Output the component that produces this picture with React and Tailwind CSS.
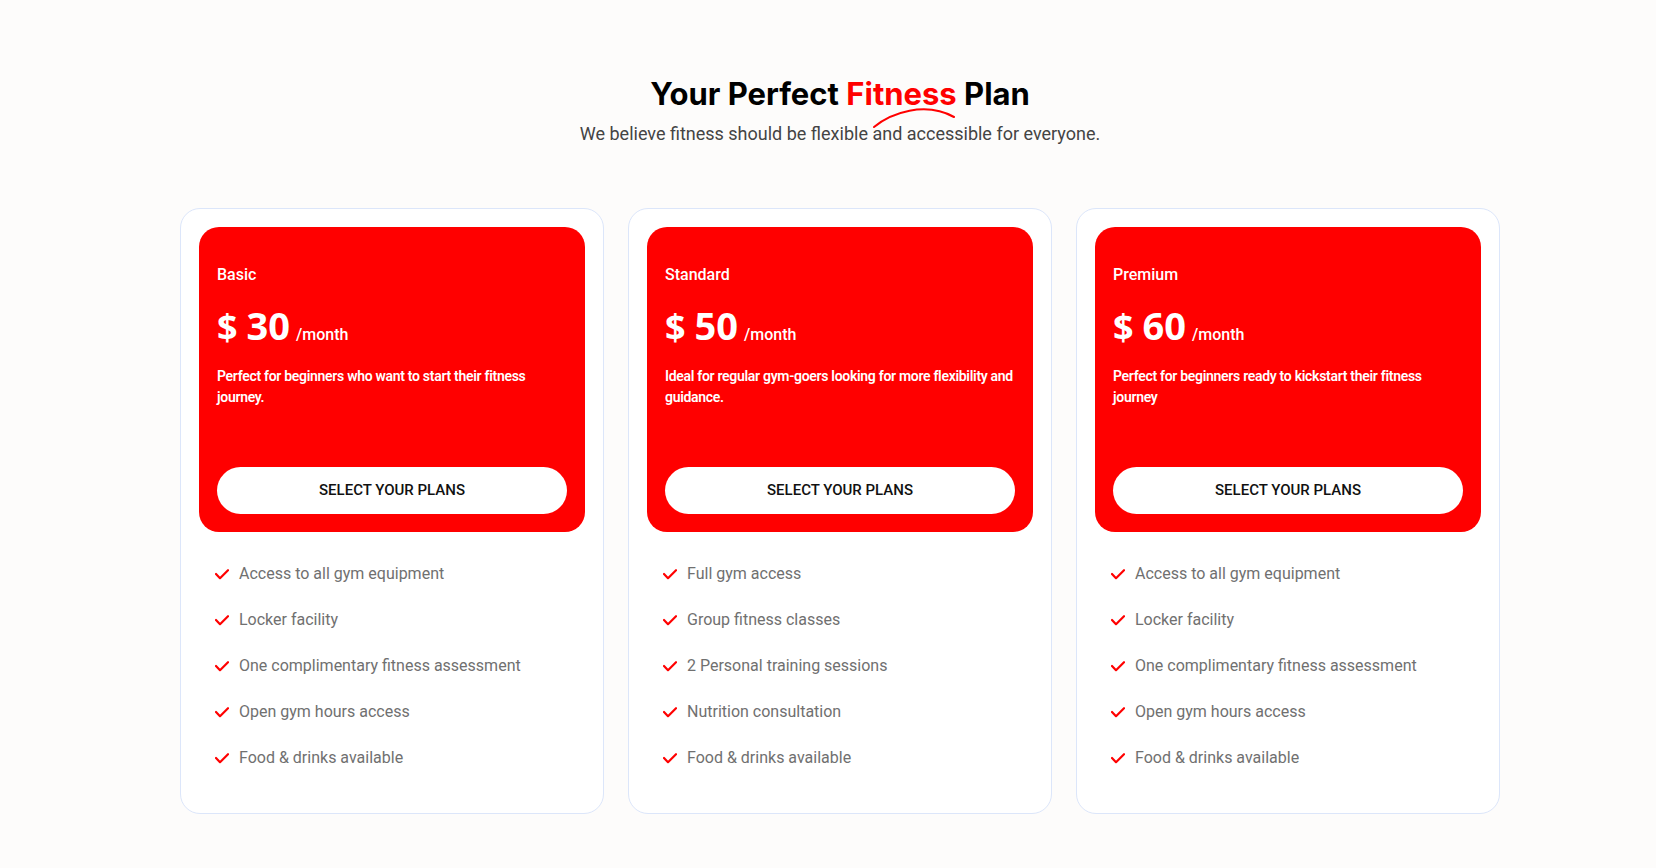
const plans = [
  {
    name: "Basic",
    price: "30",
    text: "Perfect for beginners who want to start their fitness journey.",
    features: [
      "Access to all gym equipment",
      "Locker facility",
      "One complimentary fitness assessment",
      "Open gym hours access",
      "Food & drinks available",
    ],
  },
  {
    name: "Standard",
    price: "50",
    text: "Ideal for regular gym-goers looking for more flexibility and guidance.",
    features: [
      "Full gym access",
      "Group fitness classes",
      "2 Personal training sessions",
      "Nutrition consultation",
      "Food & drinks available",
    ],
  },
  {
    name: "Premium",
    price: "60",
    text: "Perfect for beginners ready to kickstart their fitness journey",
    features: [
      "Access to all gym equipment",
      "Locker facility",
      "One complimentary fitness assessment",
      "Open gym hours access",
      "Food & drinks available",
    ],
  },
];

function CheckIcon() {
  return (
    <svg width="14" height="11" viewBox="0 0 14 11" fill="none" className="shrink-0">
      <polyline
        points="1,5 5,9.2 13,1.2"
        stroke="#ff0000"
        strokeWidth="2.2"
        strokeLinecap="round"
        strokeLinejoin="round"
      />
    </svg>
  );
}

function PlanCard({ plan }) {
  return (
    <div className="h-[606px] rounded-[20px] border border-[#dce6fa] bg-white p-[18px]">
      <div className="flex h-[305px] flex-col rounded-[20px] bg-[#ff0000] px-[18px] pt-[36px] pb-[18px] text-white">
        <h3 className="font-['Roboto',sans-serif] text-[16px] leading-6 font-medium">{plan.name}</h3>
        <div className="mt-[21px] flex items-baseline">
          <span className="font-['Open_Sans',sans-serif] text-[36px] leading-[35px] font-bold">$</span>
          <span className="ml-[9px] font-['Open_Sans',sans-serif] text-[38px] leading-[35px] font-bold">
            {plan.price}
          </span>
          <span className="ml-[6px] font-['Roboto',sans-serif] text-[16px] font-medium">/month</span>
        </div>
        <p className="mt-[19px] font-['Roboto',sans-serif] text-[14px] leading-[21px] font-semibold tracking-[-0.3px]">
          {plan.text}
        </p>
        <button className="mt-auto h-[47px] w-full rounded-full bg-white font-['Roboto',sans-serif] text-[15px] font-medium text-[#111]">
          SELECT YOUR PLANS
        </button>
      </div>
      <ul className="mt-[31px] flex flex-col gap-6 pl-4">
        {plan.features.map((f, i) => (
          <li key={i} className="flex items-center gap-[10px]">
            <CheckIcon />
            <span className="font-['Roboto',sans-serif] text-[16px] leading-[22px] text-[#707070]">{f}</span>
          </li>
        ))}
      </ul>
    </div>
  );
}

export default function App() {
  return (
    <div className="min-h-screen bg-[#fdfcfb] pt-[75px] pb-10 pl-6">
      <div className="flex flex-col items-center">
        <h2 className="font-['Inter',sans-serif] text-[31px] leading-[38px] font-bold text-black">
          Your Perfect{" "}
          <span className="relative text-[#ff0000]">
            Fitness
            <svg
              className="pointer-events-none absolute top-[32px] left-[27px] overflow-visible"
              width="82"
              height="22"
              viewBox="0 0 82 22"
              fill="none"
            >
              <path d="M1 20 C 18 6, 52 -6, 81 10" stroke="#ff0000" strokeWidth="2" strokeLinecap="round" />
            </svg>
          </span>{" "}
          Plan
        </h2>
        <p className="mt-[9px] font-['Roboto',sans-serif] text-[18px] leading-6 text-[#444]">
          We believe fitness should be flexible and accessible for everyone.
        </p>
        <div className="mt-[62px] grid w-[1320px] grid-cols-3 gap-6">
          {plans.map((p) => (
            <PlanCard key={p.name} plan={p} />
          ))}
        </div>
      </div>
    </div>
  );
}
